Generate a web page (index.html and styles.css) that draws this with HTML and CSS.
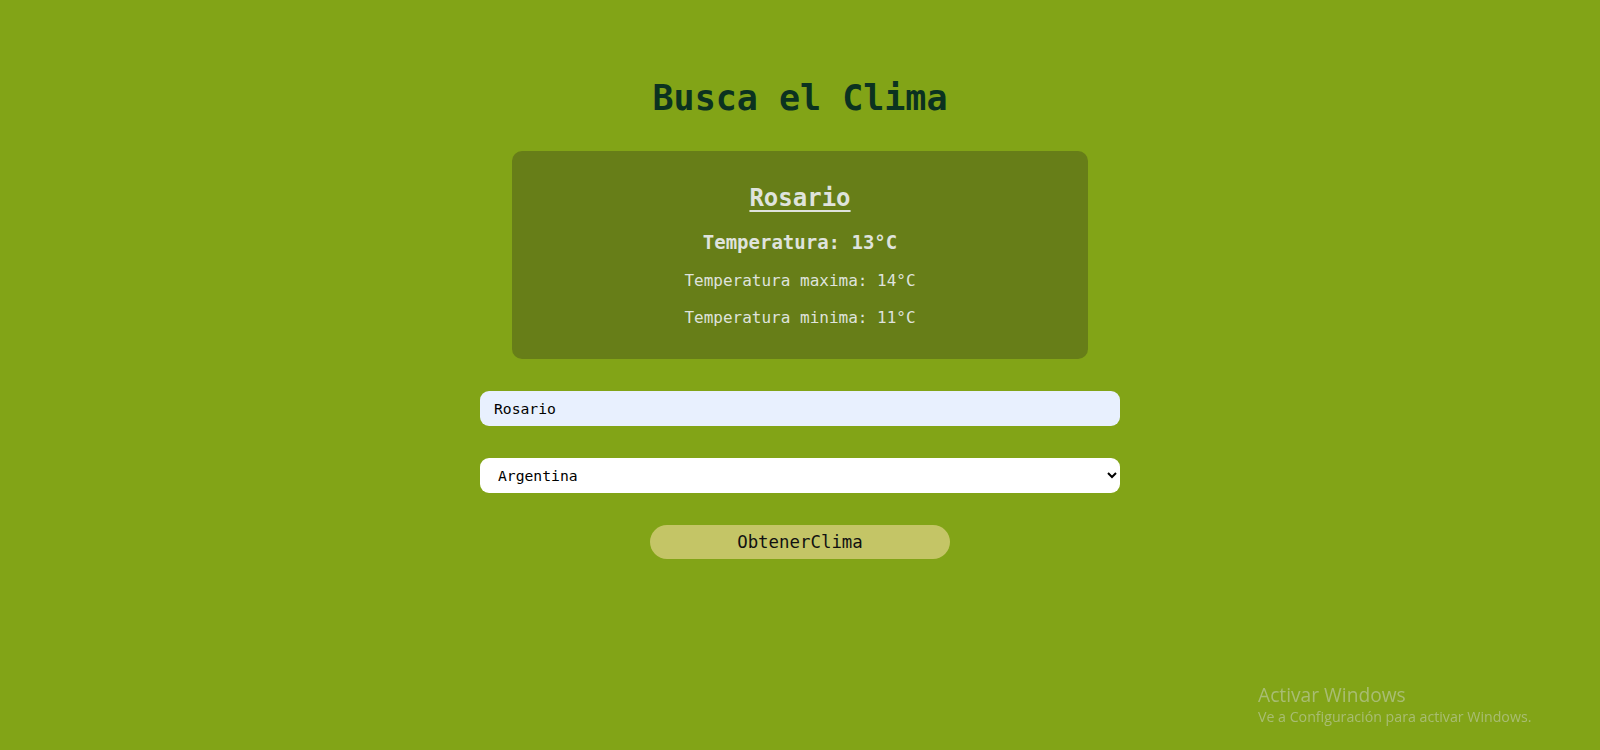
FILE: index.html
```html
<!DOCTYPE html>
<html lang="es">
<head>
<meta charset="utf-8">
<title>Busca el Clima</title>
<link rel="stylesheet" href="styles.css">
</head>
<body>
<main class="app">
  <h1 class="title">Busca el Clima</h1>
  <section class="card">
    <h2 class="city">Rosario</h2>
    <p class="temp">Temperatura: 13°C</p>
    <p class="temp-sub">Temperatura maxima: 14°C</p>
    <p class="temp-sub">Temperatura minima: 11°C</p>
  </section>
  <form class="form">
    <input class="field field-input" type="text" value="Rosario">
    <select class="field field-select">
      <option>Argentina</option>
    </select>
    <button class="btn" type="button">ObtenerClima</button>
  </form>
</main>
<div class="watermark">
  <div class="wm-title">Activar Windows</div>
  <div class="wm-sub">Ve a Configuración para activar Windows.</div>
</div>
</body>
</html>
```

FILE: styles.css
```css
html, body {
  margin: 0;
  padding: 0;
  height: 100%;
}
body {
  background: #82a417;
  font-family: "DejaVu Sans Mono", "Liberation Mono", monospace;
}
.app {
  display: flex;
  flex-direction: column;
  align-items: center;
  padding-top: 77px;
}
.title {
  margin: 0;
  font-size: 35px;
  line-height: 42px;
  font-weight: bold;
  color: #0b3220;
}
.card {
  margin-top: 32px;
  width: 576px;
  box-sizing: border-box;
  padding: 32px 20px 31px;
  background: #677e18;
  border-radius: 10px;
  display: flex;
  flex-direction: column;
  align-items: center;
  color: #dfe3dc;
}
.city {
  margin: 0;
  font-size: 24px;
  line-height: 30px;
  font-weight: bold;
  text-decoration: underline;
  text-underline-offset: 4px;
}
.temp {
  margin: 17px 0 0;
  font-size: 19px;
  line-height: 24px;
  font-weight: bold;
}
.temp-sub {
  margin: 17px 0 0;
  font-size: 16px;
  line-height: 20px;
}
.form {
  margin-top: 32px;
  display: flex;
  flex-direction: column;
  align-items: center;
  gap: 32px;
}
.field {
  width: 640px;
  height: 35px;
  box-sizing: border-box;
  border: none;
  border-radius: 9px;
  font-family: "DejaVu Sans Mono", "Liberation Mono", monospace;
  font-size: 14.7px;
  color: #000;
  outline: none;
}
.field-input {
  background: #e8f0fe;
  padding: 0 14px;
}
.field-select {
  background: #ffffff;
  padding: 0 14px;
}
.btn {
  width: 300px;
  height: 34px;
  border: none;
  border-radius: 17px;
  background: #c4c566;
  color: #111;
  font-family: "DejaVu Sans Mono", "Liberation Mono", monospace;
  font-size: 17.4px;
  padding: 0;
}
.watermark {
  position: fixed;
  left: 1258px;
  top: 683px;
  font-family: "Open Sans", "Noto Sans", sans-serif;
  color: rgba(200, 210, 190, 0.55);
}
.wm-title {
  font-size: 19.2px;
  line-height: 24px;
}
.wm-sub {
  font-size: 14.2px;
  line-height: 20px;
}
```
